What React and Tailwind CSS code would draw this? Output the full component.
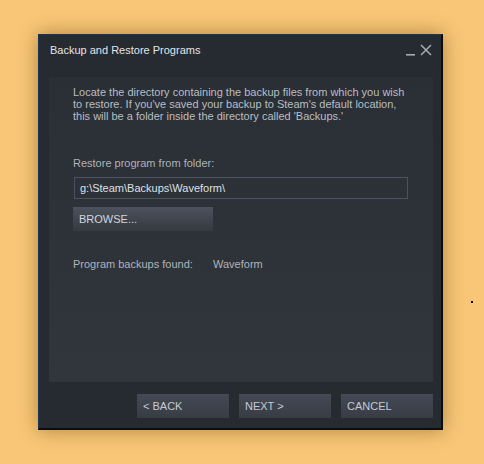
export default function App() {
  const font = { fontFamily: '"Liberation Sans", Arial, sans-serif' }
  const btn =
    'w-[92px] h-6 flex items-center pl-[6px] text-[11px] text-[#c4cbd6] bg-gradient-to-b from-[#444a55] to-[#383c45]'

  return (
    <div className="relative w-[484px] h-[464px] bg-[#f8c676] overflow-hidden" style={font}>
      <div className="absolute left-[471px] top-[301px] w-[2px] h-[2px] bg-black" />

      <div className="pt-[34px] pl-[38px]">
        {/* Window */}
        <div className="w-[405px] h-[396px] flex flex-col bg-[#262a31] border-l border-t border-[#1d3452] border-r-2 border-b-2 border-r-[#0b0d10] border-b-[#0b0d10] shadow-[0_0_18px_rgba(80,50,0,0.45)]">
          {/* Title bar */}
          <div className="h-[42px] flex items-start justify-between pt-[8px] pl-[11px] pr-[9px]">
            <span className="text-[11px] text-[#e2e5e9] leading-[14px]">Backup and Restore Programs</span>
            <div className="flex items-center gap-[5px] pt-[1px]">
              <svg width="9" height="12" viewBox="0 0 9 12">
                <rect x="0" y="10" width="9" height="1.6" fill="#a7abb0" />
              </svg>
              <svg width="12" height="12" viewBox="0 0 12 12">
                <path d="M1 1 L11 11 M11 1 L1 11" stroke="#a7abb0" strokeWidth="1.5" />
              </svg>
            </div>
          </div>

          {/* Content panel */}
          <div className="ml-[10px] mr-[8px] h-[305px] bg-gradient-to-b from-[#2a2e35] to-[#31353c] pl-[24px] pr-[24px] pt-[9px]">
            <p className="text-[11px] leading-[12px] text-[#b9bec4] w-[340px]">
              Locate the directory containing the backup files from which you wish to restore. If you've saved your backup to Steam's default location, this will be a folder inside the directory called 'Backups.'
            </p>

            <p className="mt-[34px] text-[11px] leading-[14px] text-[#aeb3b9]">Restore program from folder:</p>

            <div className="mt-[7px] ml-[1px] w-[334px] h-[22px] border border-[#4b5160] flex items-center pl-[5px] text-[11px] text-[#dde1e6]">
              g:\Steam\Backups\Waveform\
            </div>

            <div className="mt-[8px] w-[140px] h-6 flex items-center pl-[6px] text-[11px] text-[#d0d6de] bg-gradient-to-b from-[#4c525e] to-[#353940]">
              BROWSE...
            </div>

            <div className="mt-[26px] flex text-[11px] leading-[14px] text-[#aeb3b9]">
              <span className="w-[140px]">Program backups found:</span>
              <span>Waveform</span>
            </div>
          </div>

          {/* Footer */}
          <div className="flex justify-end gap-[10px] pr-[8px] pt-[12px]">
            <div className={btn}>&lt; BACK</div>
            <div className={btn}>NEXT &gt;</div>
            <div className={btn}>CANCEL</div>
          </div>
        </div>
      </div>
    </div>
  )
}
